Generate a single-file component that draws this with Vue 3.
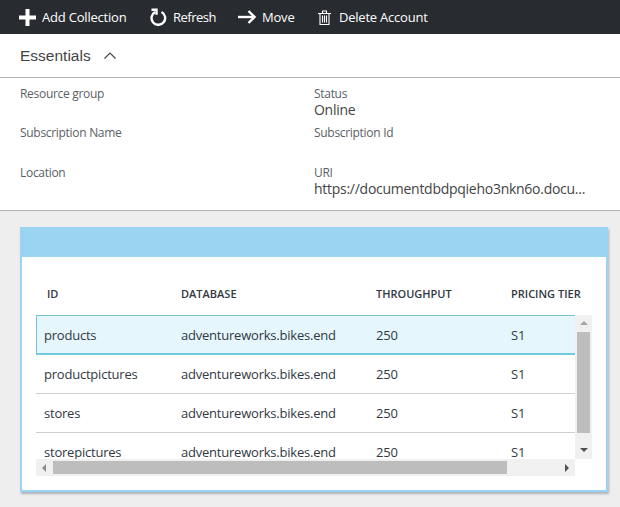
<template>
  <div class="blade">
    <div class="toolbar">
      <div class="cmd cmd-add">
        <svg width="17" height="17" viewBox="0 0 17 17"><path d="M6.500 0h4v6.500H17v4h-6.500V17h-4v-6.500H0v-4h6.500z" fill="#fff"/></svg>
        <span>Add Collection</span>
      </div>
      <div class="cmd cmd-refresh">
        <svg width="17" height="18" viewBox="0 0 17 18" fill="none" stroke="#fff" stroke-width="2.400"><path d="M11.500 4a6.800 6.800 0 1 1-6.500.1"/><path d="M1.500 1.800h5v5" /></svg>
        <span>Refresh</span>
      </div>
      <div class="cmd cmd-move">
        <svg width="18" height="14" viewBox="0 0 18 14" fill="none" stroke="#fff" stroke-width="2.400"><path d="M0 7h16"/><path d="M10.500 1l6 6-6 6"/></svg>
        <span>Move</span>
      </div>
      <div class="cmd cmd-delete">
        <svg width="13" height="15" viewBox="0 0 13 15" fill="none" stroke="#fff" stroke-width="1.100"><path d="M0 3.500h13M4.500 3.500v-2.500h4v2.500M2 3.500v11h9v-11M4.500 5.500v7M6.500 5.500v7M8.500 5.500v7"/></svg>
        <span>Delete Account</span>
      </div>
    </div>

    <div class="essentials-head">
      <span>Essentials</span>
      <svg width="12" height="7" viewBox="0 0 12 7" fill="none" stroke="#444" stroke-width="1.200"><path d="M.5 6.500l5.500-5.500 5.500 5.500"/></svg>
    </div>

    <div class="essentials">
      <div v-for="item in essentials" :key="item.label" class="field">
        <div class="field-label">{{ item.label }}</div>
        <div class="field-value">{{ item.value }}</div>
      </div>
    </div>

    <div class="content">
      <div class="card">
        <div class="card-head"></div>
        <div class="card-body">
          <div class="row head-row">
            <div class="cell first">ID</div>
            <div class="cell">DATABASE</div>
            <div class="cell">THROUGHPUT</div>
            <div class="cell">PRICING TIER</div>
          </div>
          <div class="table-frame">
            <div class="rows">
              <div v-for="(row, i) in rows" :key="row.id" class="row data-row" :class="{ selected: i === 0 }">
                <div class="cell first">{{ row.id }}</div>
                <div class="cell">adventureworks.bikes.end</div>
                <div class="cell">250</div>
                <div class="cell">S1</div>
              </div>
            </div>
            <div class="vscroll">
              <div class="arrow up"></div>
              <div class="vthumb"></div>
              <div class="arrow down"></div>
            </div>
            <div class="hscroll">
              <div class="arrow left"></div>
              <div class="hthumb"></div>
              <div class="arrow right"></div>
            </div>
          </div>
        </div>
      </div>
    </div>
  </div>
</template>

<script setup>
const essentials = [
  { label: 'Resource group', value: '' },
  { label: 'Status', value: 'Online' },
  { label: 'Subscription Name', value: '' },
  { label: 'Subscription Id', value: '' },
  { label: 'Location', value: '' },
  { label: 'URI', value: 'https://documentdbdpqieho3nkn6o.docu...' }
]

const rows = [
  { id: 'products' },
  { id: 'productpictures' },
  { id: 'stores' },
  { id: 'storepictures' }
]
</script>

<style>
html, body {
  margin: 0;
  background: #eeeeee;
}
</style>

<style scoped>
.blade {
  width: 620px;
  height: 507px;
  overflow: hidden;
  font-family: "Open Sans", "Noto Sans", sans-serif;
  color: #32383f;
  background: #eeeeee;
}

.toolbar {
  height: 34px;
  background: #282c30;
  display: flex;
  align-items: center;
  padding-left: 19px;
  color: #fff;
  font-size: 13px;
  letter-spacing: -0.2px;
}

.cmd {
  display: flex;
  align-items: center;
}

.cmd-add { gap: 6px; width: 131px; }
.cmd-refresh { gap: 6px; width: 88px; letter-spacing: -0.5px; }
.cmd-move { gap: 6px; width: 81px; }
.cmd-delete { gap: 8px; letter-spacing: -0.22px; margin-left: -1px; }

.essentials-head {
  height: 44px;
  box-sizing: border-box;
  background: #fff;
  border-bottom: 1px solid #b4b4b4;
  display: flex;
  align-items: center;
  gap: 13px;
  padding: 0 0 0 20px;
  font-family: "Liberation Sans", Arial, sans-serif;
  font-size: 15.500px;
  color: #444;
}

.essentials {
  height: 133px;
  box-sizing: border-box;
  background: #fff;
  border-bottom: 1px solid #b4b4b4;
  padding: 8px 0 0 20px;
  display: grid;
  grid-template-columns: 294px 1fr;
  grid-template-rows: 39px 40px 40px;
}

.field-label {
  font-size: 12px;
  line-height: 16px;
  color: #5a5f66;
  letter-spacing: -0.3px;
}

.field-value {
  font-size: 14px;
  line-height: 15px;
  color: #444;
  letter-spacing: -0.27px;
}

.content {
  padding: 16px 12px 0 20px;
}

.card {
  height: 265px;
  box-sizing: border-box;
  border: 2px solid #9bd4f3;
  border-top: 0;
  background: #fff;
  box-shadow: 1px 2px 2px rgba(90, 110, 125, 0.45);
  display: flex;
  flex-direction: column;
}

.card-head {
  height: 30px;
  background: #9bd4f3;
  margin: 0 -2px;
}

.card-body {
  padding: 0 14px;
}

.row {
  display: grid;
  grid-template-columns: 145px 195px 135px 64px;
  align-items: center;
}

.cell {
  white-space: nowrap;
}

.head-row {
  height: 58px;
  padding-top: 14px;
  box-sizing: border-box;
  font-size: 11px;
  font-weight: 600;
  color: #32383f;
}

.head-row .first {
  padding-left: 11px;
}

.table-frame {
  display: grid;
  grid-template-columns: 539px 17px;
  grid-template-rows: 144px 17px;
}

.rows {
  overflow: hidden;
  font-size: 13px;
  letter-spacing: -0.22px;
}

.data-row {
  height: 39px;
  box-sizing: border-box;
  border-bottom: 1px solid #cfcfcf;
}

.data-row .first {
  padding-left: 8px;
}

.data-row.selected {
  height: 40px;
  padding-top: 1px;
  background: #e5f6fd;
  border-bottom: 2px solid #70cbe2;
  box-shadow: inset 1px 1px 0 #7ac0d4;
}

.vscroll {
  background: #f0f0f0;
  display: flex;
  flex-direction: column;
  align-items: center;
}

.hscroll {
  background: #f0f0f0;
  display: flex;
  align-items: center;
}

.vthumb {
  width: 13px;
  height: 101px;
  margin-top: 7px;
  background: #bdbdbd;
}

.hthumb {
  width: 454px;
  height: 13px;
  margin-left: 7px;
  background: #bdbdbd;
}

.arrow {
  width: 0;
  height: 0;
  border-style: solid;
  border-color: transparent;
}

.arrow.up {
  margin-top: 6px;
  border-width: 0 4px 4px;
  border-bottom-color: #a6a6a6;
}

.arrow.down {
  margin-top: 15px;
  border-width: 4px 4px 0;
  border-top-color: #505050;
}

.arrow.left {
  margin-left: 6px;
  border-width: 4px 4px 4px 0;
  border-right-color: #8c8c8c;
}

.arrow.right {
  margin-left: 58px;
  border-width: 4px 0 4px 4px;
  border-left-color: #505050;
}
</style>
